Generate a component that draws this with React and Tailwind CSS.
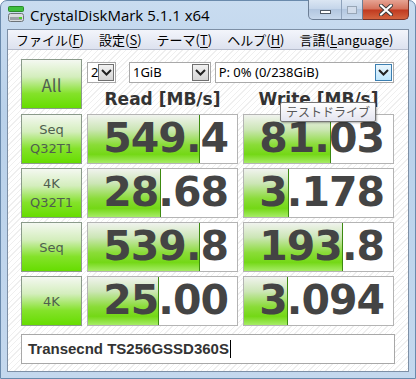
import React from 'react';

const rows = [
    { label: ['Seq', 'Q32T1'], read: '549.4', write: '81.03', rw: 112, ww: 87 },
    { label: ['4K', 'Q32T1'], read: '28.68', write: '3.178', rw: 73, ww: 45 },
    { label: ['Seq'], read: '539.8', write: '193.8', rw: 112, ww: 99 },
    { label: ['4K'], read: '25.00', write: '3.094', rw: 71, ww: 44 },
];

const greenBtn =
    'border border-[#8a9a8a] bg-[linear-gradient(to_bottom,#f4f8f1_0%,#d4eebd_35%,#84e22a_70%,#66dd00_100%)] text-[#4f5f4f] flex flex-col items-center justify-center leading-[19px]';

const barBg =
    'bg-[linear-gradient(to_bottom,#f0f3ee_0%,#cce6b6_30%,#8adc38_62%,#74d816_82%,#a6ec66_100%)]';

function Chevron({ color = '#222' }) {
    return (
        <svg width="11" height="7" viewBox="0 0 11 7">
            <path d="M1 1 L5.5 5.5 L10 1" fill="none" stroke={color} strokeWidth="2" />
        </svg>
    );
}

function Combo({ w, text, blue }) {
    return (
        <div className={`${w} h-[21px] flex items-stretch bg-white border border-[#a9a9a9]`}>
            <div className="flex-1 pl-[3px] text-[13px] leading-[19px] text-black font-['Noto_Sans','DejaVu_Sans',sans-serif]">
                {text}
            </div>
            <div
                className={`w-[17px] my-px mr-px flex items-center justify-center border ${
                    blue
                        ? 'border-[#3c7fb1] bg-[linear-gradient(to_bottom,#eaf6fd,#bee6fd)]'
                        : 'border-[#707070] bg-[linear-gradient(to_bottom,#f2f2f2,#d4d4d4)]'
                }`}
            >
                <Chevron />
            </div>
        </div>
    );
}

function Value({ text, bar }) {
    return (
        <div className="relative h-[50px] bg-white border border-[#b4b4b4] overflow-hidden">
            <div className={`absolute left-0 top-0 bottom-0 ${barBg} border-r border-[#3c8a10]`} style={{ width: bar }} />
            <div className="relative h-full flex items-center justify-end pr-[9px] text-[41px] font-bold tracking-[-1px] text-[#444] font-['DejaVu_Sans',sans-serif]">
                {text}
            </div>
        </div>
    );
}

function MenuItem({ pre, k }) {
    return (
        <span>
            {pre}(<span className="underline underline-offset-2">{k}</span>)
        </span>
    );
}

export default function App() {
    return (
        <div className="w-[416px] h-[379px] bg-white">
            <div className="w-full h-full rounded-t-[7px] border border-[#6a8aac] bg-[linear-gradient(to_bottom,#c9dcf0,#b9d1ea_30%,#c4d8ee)] flex flex-col px-[6px] pb-[6px] font-['Noto_Sans_CJK_JP',sans-serif]">
                {/* title bar */}
                <div className="h-[28px] flex items-start shrink-0">
                    <svg width="17" height="17" viewBox="0 0 17 17" className="mt-[5px] ml-[1px]">
                        <rect x="0.5" y="0.5" width="15" height="5" rx="1" fill="#3fbf3f" stroke="#2a8a2a" />
                        <rect x="0.5" y="7.5" width="15" height="8" rx="2" fill="#d8dcdf" stroke="#6c7378" />
                        <rect x="2" y="11" width="12" height="3" fill="#9aa2a8" />
                        <rect x="11" y="11" width="3" height="2" fill="#4ccf2a" />
                    </svg>
                    <div className="ml-[5px] mt-[4px] text-[15px] leading-[20px] text-black font-['Open_Sans',sans-serif]">
                        CrystalDiskMark 5.1.1 x64
                    </div>
                    <div className="ml-auto -mt-px flex">
                        <div className="w-[55px] h-[20px] flex border border-[#6d7f96] border-t-0 rounded-bl-[5px] bg-[linear-gradient(to_bottom,#dbe6f3,#c3d4e9_50%,#b2c6df_50%,#c7d8ec)]">
                            <div className="w-[33px] flex items-center justify-center border-r border-[#8ea2bb]">
                                <div className="w-[11px] h-[4px] mt-[5px] bg-white border border-[#505a66]" />
                            </div>
                            <div className="flex-1 flex items-center justify-center">
                                <div className="w-[10px] h-[8px] border border-[#98a6b6] bg-[#d2dcea]" />
                            </div>
                        </div>
                        <div className="w-[46px] h-[20px] flex items-center justify-center border border-[#76332a] border-t-0 border-l-0 rounded-br-[5px] bg-[linear-gradient(to_bottom,#e6a393,#d4715b_48%,#c0391f_52%,#d3643f)]">
                            <svg width="14" height="12" viewBox="0 0 14 12">
                                <path d="M2 1.5 L12 10.5 M12 1.5 L2 10.5" stroke="#3a3a3a" strokeWidth="4" strokeLinecap="round" />
                                <path d="M2 1.5 L12 10.5 M12 1.5 L2 10.5" stroke="#fff" strokeWidth="2.2" strokeLinecap="round" />
                            </svg>
                        </div>
                    </div>
                </div>

                {/* client area */}
                <div className="flex-1 flex flex-col border border-[#7d8fa5] bg-white">
                    <div className="h-[20px] flex items-center gap-[15px] pl-[8px] text-[13px] leading-[18px] text-black border-b border-[#b6bccc] bg-[linear-gradient(to_bottom,#f3f5fb,#dde2ef)]">
                        <MenuItem pre="ファイル" k="F" />
                        <MenuItem pre="設定" k="S" />
                        <MenuItem pre="テーマ" k="T" />
                        <MenuItem pre="ヘルプ" k="H" />
                        <span>
                            言語(<span className="underline underline-offset-2">L</span>anguage)
                        </span>
                    </div>

                    <div className="relative flex-1 pl-[13px] pt-[9px] bg-[image:repeating-linear-gradient(135deg,#ffffff_0px,#ffffff_3px,#efefef_3px,#efefef_4px)]">
                        <div className="grid grid-cols-[61px_151px_151px] gap-x-[5px] gap-y-[4px]">
                            <div className={`${greenBtn} h-[50px] text-[17px]`}>All</div>
                            <div className="col-span-2 flex flex-col">
                                <div className="flex mt-[3px] h-[21px]">
                                    <Combo w="w-[29px]" text="2" />
                                    <div className="w-[13px]" />
                                    <Combo w="w-[82px]" text="1GiB" />
                                    <div className="w-[4px]" />
                                    <Combo w="w-[180px]" text="P: 0% (0/238GiB)" blue />
                                </div>
                                <div className="grid grid-cols-[151px_151px] gap-x-[5px] mt-[5px] text-[17px] leading-[22px] font-bold text-[#333] font-['DejaVu_Sans',sans-serif] text-center">
                                    <div>Read [MB/s]</div>
                                    <div>Write [MB/s]</div>
                                </div>
                            </div>

                            {rows.map((r, i) => (
                                <React.Fragment key={i}>
                                    <div className={`${greenBtn} h-[50px] text-[13px] font-['DejaVu_Sans',sans-serif]`}>
                                        {r.label.map((l) => (
                                            <div key={l}>{l}</div>
                                        ))}
                                    </div>
                                    <Value text={r.read} bar={r.rw} />
                                    <Value text={r.write} bar={r.ww} />
                                </React.Fragment>
                            ))}
                        </div>

                        <div className="mt-[8px] w-[374px] h-[30px] flex items-center pl-[6px] bg-white border border-[#a8a8a8] text-[15px] font-bold text-[#333] font-['Liberation_Sans',sans-serif]">
                            Transecnd TS256GSSD360S
                            <span className="ml-px w-px h-[18px] bg-black" />
                        </div>

                        {/* tooltip */}
                        <div className="absolute left-[272px] top-[52px] h-[20px] px-[5px] flex items-center rounded-[2px] border border-[#767676] bg-[linear-gradient(to_bottom,#ffffff,#e4e5f0)] shadow-[1px_1px_2px_rgba(0,0,0,0.3)] text-[12px] text-[#575757]">
                            テストドライブ
                        </div>
                    </div>
                </div>
            </div>
        </div>
    );
}
